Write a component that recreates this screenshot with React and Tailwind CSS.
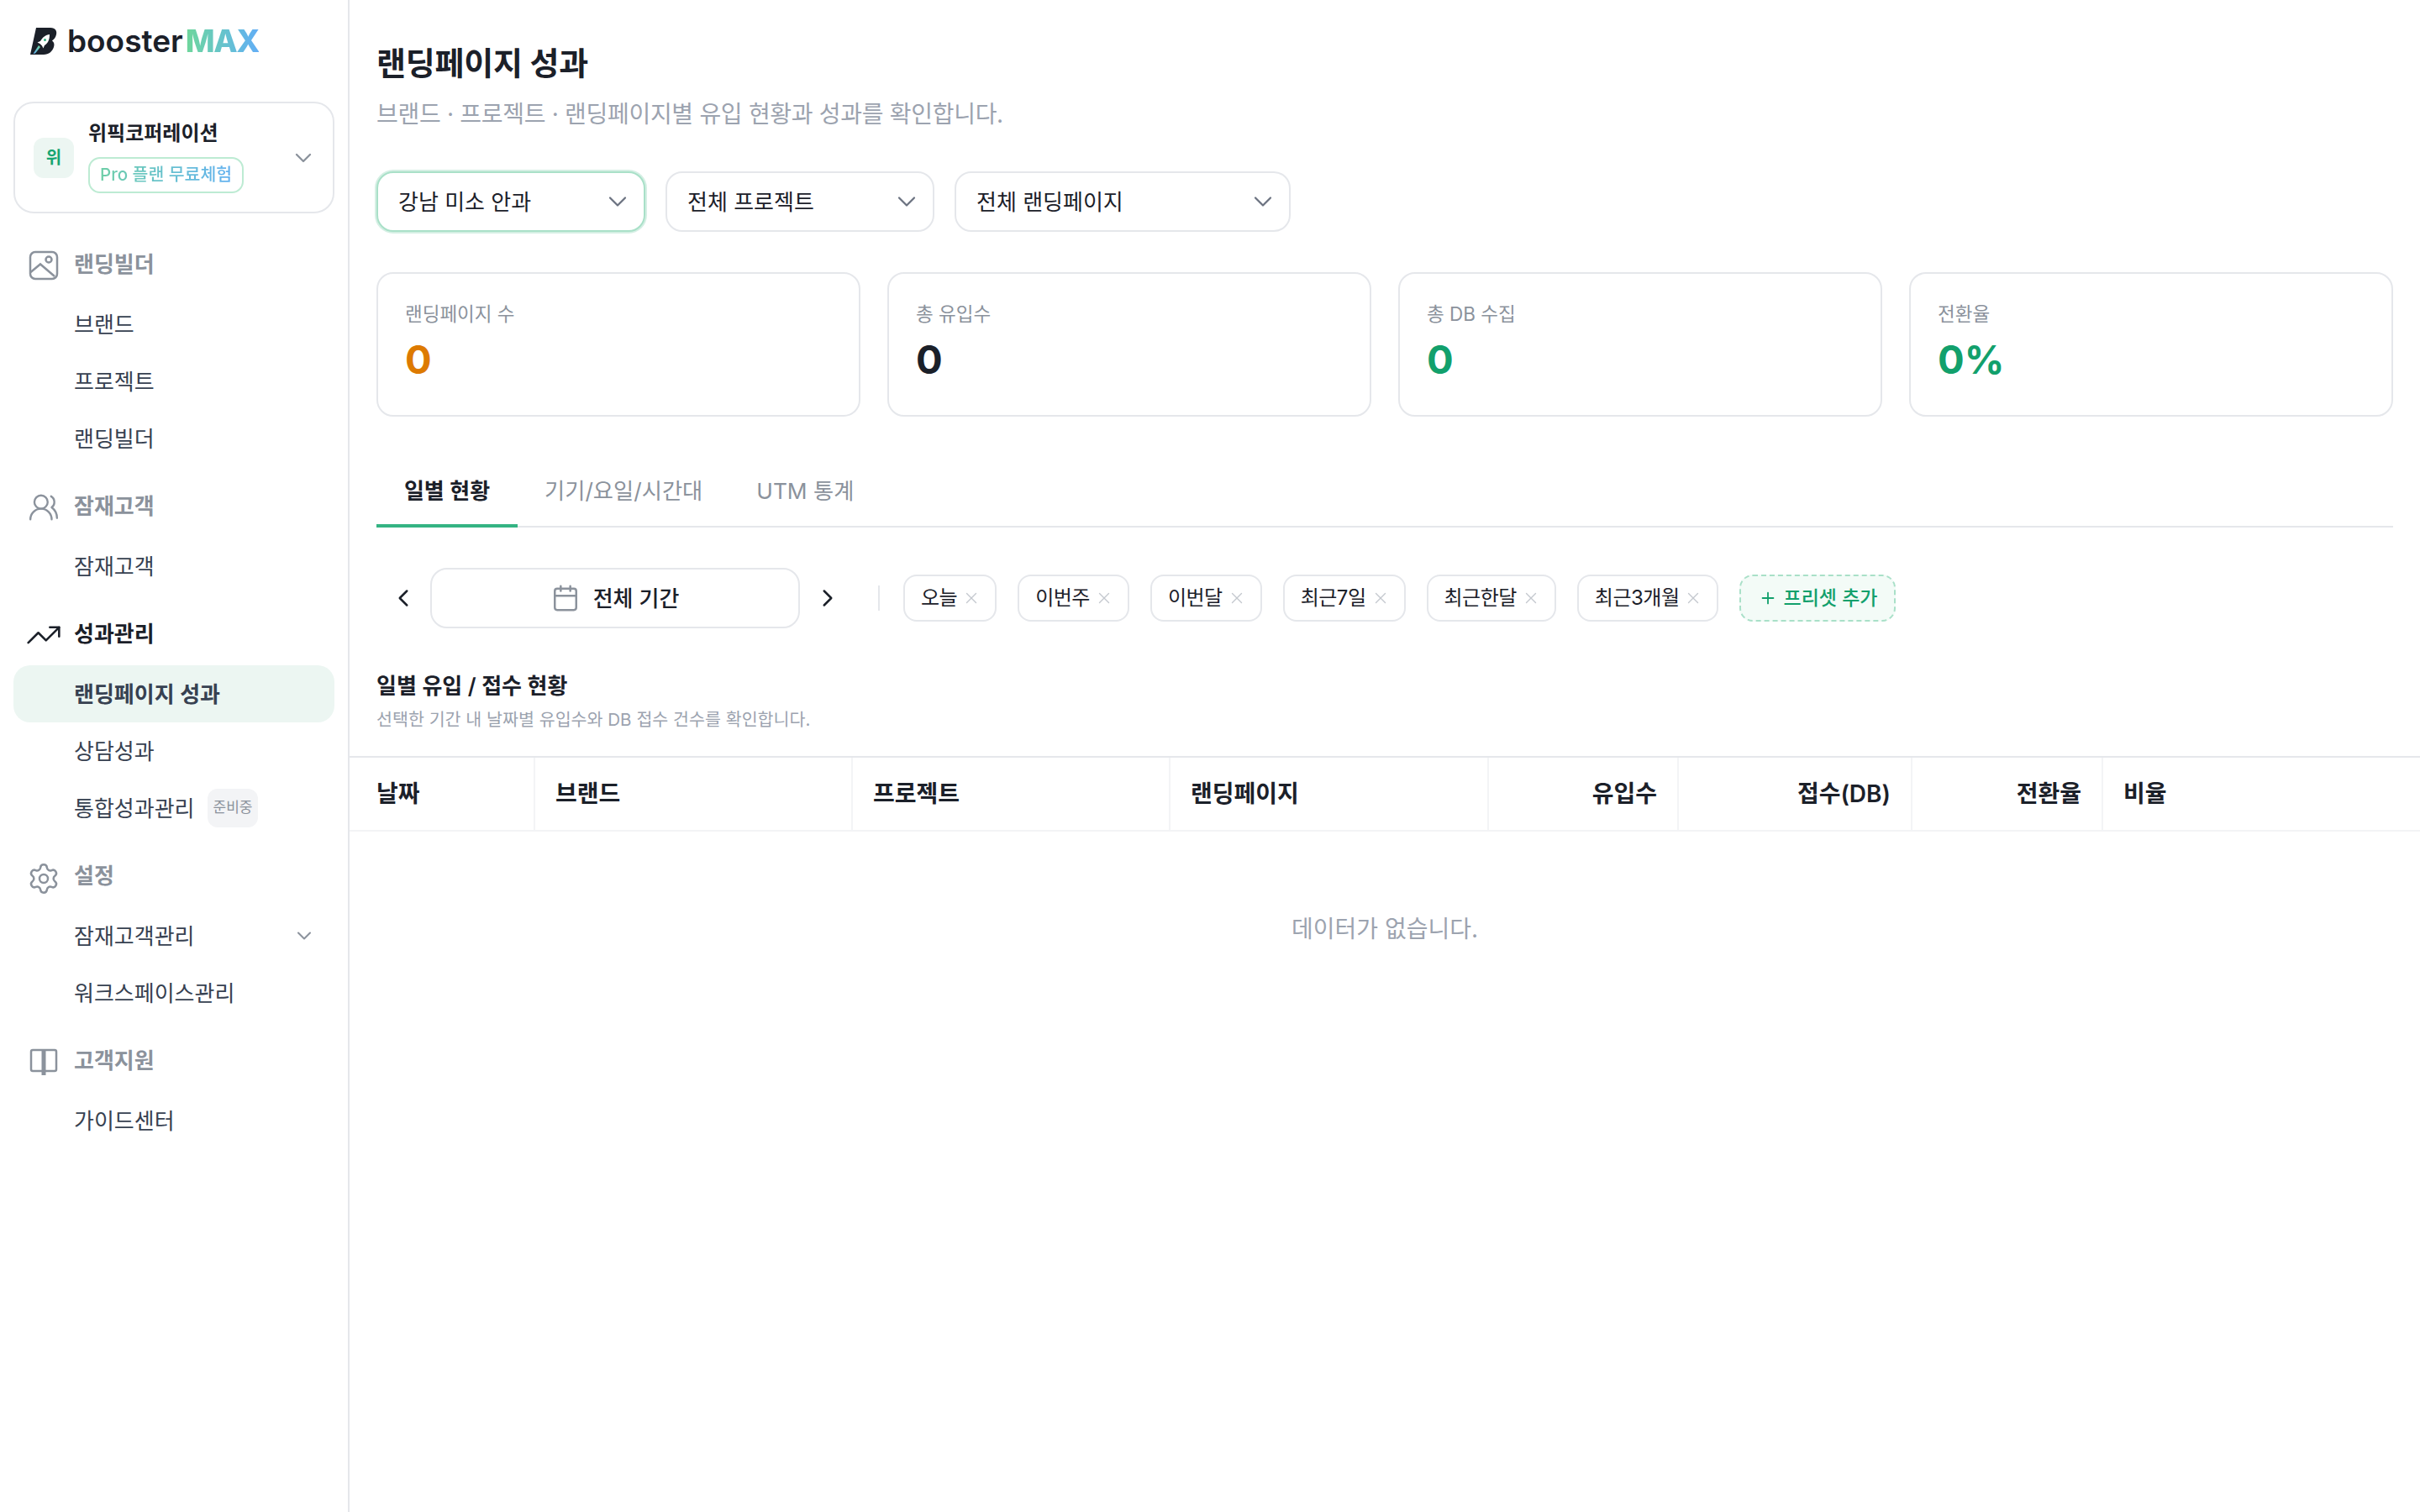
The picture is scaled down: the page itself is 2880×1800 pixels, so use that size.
import React from 'react';
import { ChevronDown, ChevronLeft, ChevronRight, Calendar, Plus, Settings, TrendingUp, UsersRound, X } from 'lucide-react';

const FONT = "font-['Inter','Noto_Sans_CJK_KR',sans-serif]";

const LogoMark = () => (
  <svg width="32" height="32" viewBox="0 0 32 32" className="shrink-0">
    <defs>
      <linearGradient id="trail" x1="0" y1="1" x2="1" y2="0">
        <stop offset="0" stopColor="#63aef5" />
        <stop offset="1" stopColor="#6fd69a" />
      </linearGradient>
    </defs>
    <path d="M7 0h17c6 0 8 4 7 8-.8 3.500-2.500 5.700-5 7.500 2.500 1.500 3 4.500 2 7.500-1.500 5-6 9-12 9H0z" fill="#1b2029" />
    <path d="M23 8c-4.500.5-8.500 3.500-11 8l-3.500 1.500 3 1.500 2.500 2.500 1.500 3 1.500-3.500c4-2.500 6-7 6-12.500z" fill="#fff" />
    <circle cx="17.500" cy="14.500" r="1.500" fill="#2fae7f" />
    <path d="M10 21 3.500 31l2.500-.5 6-7.500z" fill="url(#trail)" />
  </svg>
);

const ImageIcon = () => (
  <svg width="36" height="36" viewBox="0 0 36 36" fill="none" stroke="#8b929c" strokeWidth="2.500" className="shrink-0">
    <rect x="2" y="2" width="32" height="32" rx="6" />
    <circle cx="24" cy="11" r="3.500" />
    <path d="M2.500 26 14 16.500 31 31" />
  </svg>
);

const BookIcon = () => (
  <svg width="36" height="36" viewBox="0 0 36 36" fill="none" stroke="#8b929c" strokeWidth="2.500" className="shrink-0">
    <path d="M18 4H5a2 2 0 0 0-2 2v21a2 2 0 0 0 2 2h26a2 2 0 0 0 2-2V6a2 2 0 0 0-2-2z" />
    <path d="M18 4v30" strokeWidth="5" />
  </svg>
);

const sections = [
  { title: '랜딩빌더', icon: <ImageIcon />, items: [{ label: '브랜드' }, { label: '프로젝트' }, { label: '랜딩빌더' }] },
  { title: '잠재고객', icon: <UsersRound size={38} strokeWidth={1.500} color="#8b929c" className="shrink-0" />, items: [{ label: '잠재고객' }] },
  {
    title: '성과관리',
    active: true,
    icon: <TrendingUp size={44} strokeWidth={1.400} color="#1b2029" className="shrink-0" />,
    items: [{ label: '랜딩페이지 성과', active: true }, { label: '상담성과' }, { label: '통합성과관리', badge: '준비중' }],
  },
  { title: '설정', icon: <Settings size={40} strokeWidth={1.500} color="#8b929c" className="shrink-0 translate-y-[2px]" />, items: [{ label: '잠재고객관리', chevron: true }, { label: '워크스페이스관리' }] },
  { title: '고객지원', icon: <BookIcon />, items: [{ label: '가이드센터' }] },
];

const Sidebar = () => (
  <aside className="w-[416px] shrink-0 border-r-2 border-[#e5e7eb] min-h-[1800px] px-4">
    <div className="h-[94px] pl-5 flex items-center gap-3 pt-[3px]">
      <LogoMark />
      <div className="flex items-baseline">
        <span className="text-[37px] font-semibold text-[#1b2029]">booster</span>
        <span className="text-[37px] font-extrabold ml-[3px] tracking-[-1.500px] bg-gradient-to-r from-[#6fd69a] to-[#63aef5] bg-clip-text text-transparent">MAX</span>
      </div>
    </div>

    <div className="mt-[27px] h-[133px] rounded-3xl border-2 border-[#e5e7eb] pl-[22px] pr-[19px] flex items-center">
      <div className="w-12 h-12 rounded-xl bg-[#ecf6f2] text-[#16a571] text-[20px] font-semibold flex items-center justify-center">위</div>
      <div className="ml-[17px] flex-1 pb-[5px]">
        <p className="text-[24px] leading-[36px] font-semibold text-[#1b2029]">위픽코퍼레이션</p>
        <span className="mt-[10px] inline-flex h-[43px] px-3 items-center rounded-[14px] border-2 border-[#bdebd3] text-[20.500px] font-medium bg-gradient-to-r from-[#6fd0a0] to-[#63aef5] bg-clip-text text-transparent">Pro 플랜 무료체험</span>
      </div>
      <ChevronDown size={32} strokeWidth={1.750} color="#8b929c" className="shrink-0" />
    </div>

    <nav className="mt-[22px] flex flex-col gap-2">
      {sections.map((section) => (
        <div key={section.title}>
          <div className="h-[76px] flex items-center gap-[18px] pl-[18px]">
            <span className="w-9 flex justify-center translate-y-[2px]">{section.icon}</span>
            <span className={`text-[26px] font-semibold ${section.active ? 'text-[#1b2029]' : 'text-[#8b929c]'}`}>{section.title}</span>
          </div>
          {section.items.map((item) => (
            <div key={item.label} className={`h-[68px] pl-[72px] pr-[22px] flex items-center rounded-[20px] ${item.active ? 'bg-[#ecf6f2] font-semibold text-[#374151]' : 'text-[#374151]'}`}>
              <span className="text-[26px]">{item.label}</span>
              {item.badge && (
                <span className="ml-[15px] h-[46px] px-[7px] rounded-xl bg-[#f3f4f6] text-[#8b929c] text-[17px] flex items-center">{item.badge}</span>
              )}
              {item.chevron && <ChevronDown size={28} strokeWidth={1.750} color="#8b929c" className="ml-auto" />}
            </div>
          ))}
        </div>
      ))}
    </nav>
  </aside>
);

const Select = ({ label, width, focused }) => (
  <button type="button" className={`h-[72px] ${width} pl-6 pr-[13px] rounded-[20px] border-2 bg-white flex items-center justify-between text-[26px] text-[#1b2029] ${focused ? 'border-[#a9e0c8] ring-2 ring-[#d5efe4]' : 'border-[#e5e7eb]'}`}>
    {label}
    <ChevronDown size={36} strokeWidth={1.500} color="#6b7280" />
  </button>
);

const stats = [
  { label: '랜딩페이지 수', value: '0', color: 'text-[#dd7a00]' },
  { label: '총 유입수', value: '0', color: 'text-[#1b2029]' },
  { label: '총 DB 수집', value: '0', color: 'text-[#12a06c]' },
  { label: '전환율', value: '0%', color: 'text-[#12a06c]' },
];

const presets = ['오늘', '이번주', '이번달', '최근7일', '최근한달', '최근3개월'];

const columns = [
  { label: '날짜', cls: 'pl-8' },
  { label: '브랜드', cls: 'pl-6' },
  { label: '프로젝트', cls: 'pl-6' },
  { label: '랜딩페이지', cls: 'pl-6' },
  { label: '유입수', cls: 'pr-6 justify-end' },
  { label: '접수(DB)', cls: 'pr-6 justify-end' },
  { label: '전환율', cls: 'pr-6 justify-end' },
  { label: '비율', cls: 'pl-6' },
];

const Main = () => (
  <main className="flex-1 min-w-0">
    <div className="px-8">
      <h1 className="mt-[50px] text-[38px] leading-[50px] font-bold tracking-[-0.2px] text-[#1b2029]">랜딩페이지 성과</h1>
      <p className="mt-4 text-[28px] leading-[40px] tracking-[-0.3px] text-[#9ca3af]">브랜드 · 프로젝트 · 랜딩페이지별 유입 현황과 성과를 확인합니다.</p>

      <div className="mt-[48px] flex gap-6">
        <Select label="강남 미소 안과" width="w-[320px]" focused />
        <Select label="전체 프로젝트" width="w-[320px]" />
        <Select label="전체 랜딩페이지" width="w-[400px]" />
      </div>

      <div className="mt-[48px] grid grid-cols-4 gap-8">
        {stats.map((stat) => (
          <div key={stat.label} className="h-[172px] rounded-[20px] border-2 border-[#e5e7eb] px-8 pt-[32px]">
            <p className="text-[22.500px] leading-8 text-[#8b929c]">{stat.label}</p>
            <p className={`mt-2 text-[47px] leading-[60px] font-bold ${stat.color}`}>{stat.value}</p>
          </div>
        ))}
      </div>

      <div className="mt-[48px] h-[84px] flex border-b-2 border-[#e5e7eb]">
        <div className="h-[84px] w-[168px] justify-center border-b-4 border-[#34b383] flex items-center text-[26px] font-semibold text-[#1b2029]">일별 현황</div>
        <div className="h-[84px] px-8 pb-[2px] flex items-center text-[26.300px] text-[#8b929c]">기기/요일/시간대</div>
        <div className="h-[84px] px-8 pb-[2px] flex items-center text-[26.300px] text-[#8b929c]">UTM 통계</div>
      </div>

      <div className="mt-[48px] flex items-center">
        <ChevronLeft size={34} strokeWidth={1.750} color="#1b2029" className="ml-[15px]" />
        <button type="button" className="ml-[15px] w-[440px] h-[72px] rounded-[20px] border-2 border-[#e5e7eb] flex items-center justify-center gap-4 text-[26px] font-medium text-[#1b2029]">
          <Calendar size={34} strokeWidth={1.750} color="#8b929c" />
          전체 기간
        </button>
        <ChevronRight size={34} strokeWidth={1.750} color="#1b2029" className="ml-4" />
        <div className="ml-[43px] w-[2px] h-[30px] bg-[#e5e7eb]" />
        <div className="ml-7 flex gap-[25px]">
          {presets.map((preset) => (
            <span key={preset} className="h-14 pl-[19px] pr-[17px] rounded-2xl border-2 border-[#e5e7eb] flex items-center gap-[6px] text-[24px] tracking-[-0.5px] text-[#1b2029]">
              {preset}
              <X size={22} strokeWidth={1.500} color="#c4c8ce" />
            </span>
          ))}
          <span className="h-14 w-[186px] justify-center rounded-2xl border-2 border-dashed border-[#a9e0c8] bg-[#f3fbf7] flex items-center gap-2 text-[23px] font-medium text-[#12a06c]">
            <Plus size={22} strokeWidth={2} />
            프리셋 추가
          </span>
        </div>
      </div>

      <h2 className="mt-[49px] text-[26px] leading-10 font-semibold text-[#1b2029]">일별 유입 / 접수 현황</h2>
      <p className="mt-[3px] text-[20.600px] leading-[34px] text-[#9ca3af]">선택한 기간 내 날짜별 유입수와 DB 접수 건수를 확인합니다.</p>
    </div>

    <div className="mt-[26px] border-t-2 border-[#e5e7eb]">
      <div className="h-[88px] grid grid-cols-[221px_378px_378px_379px_226px_278px_227px_1fr] border-b-2 border-[#f3f4f6]">
        {columns.map((col) => (
          <div key={col.label} className={`flex items-center text-[28px] font-semibold text-[#1b2029] border-r-2 border-[#f3f4f6] last:border-r-0 ${col.cls}`}>{col.label}</div>
        ))}
      </div>
      <p className="mt-[96px] text-center text-[28px] leading-10 text-[#9ca3af]">데이터가 없습니다.</p>
    </div>
  </main>
);

export default function App() {
  return (
    <div className={`flex w-[2880px] min-h-[1800px] bg-white ${FONT}`}>
      <Sidebar />
      <Main />
    </div>
  );
}
